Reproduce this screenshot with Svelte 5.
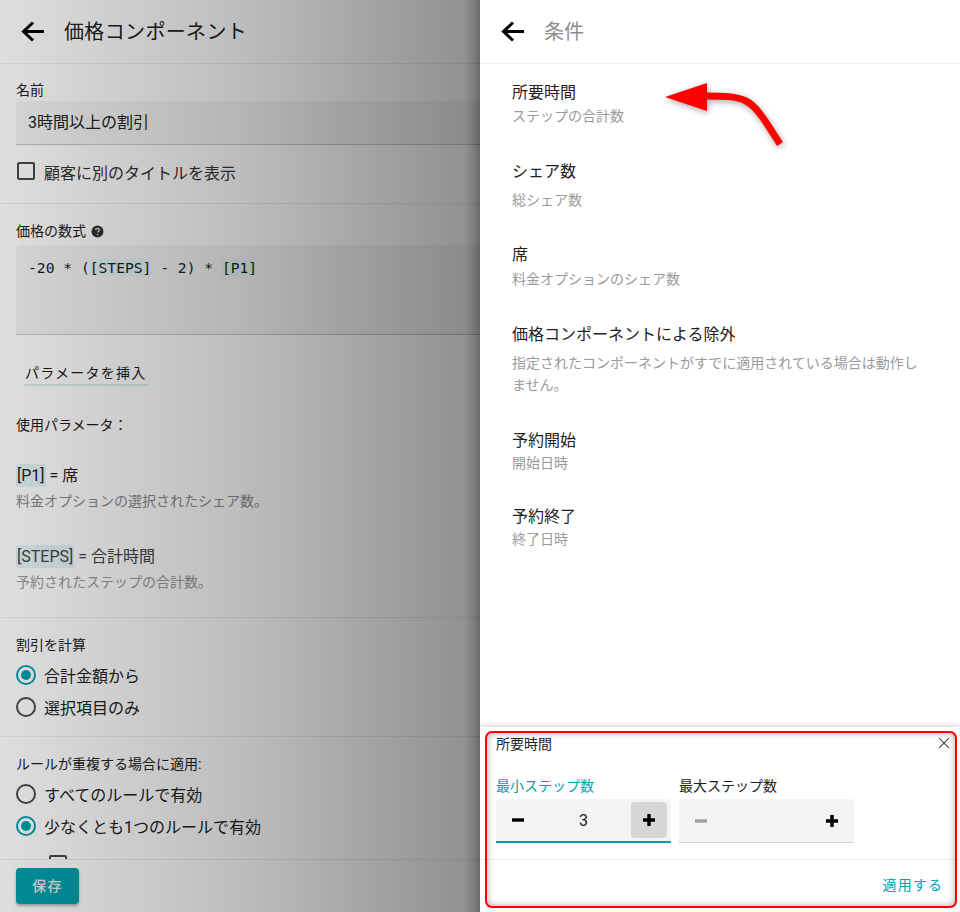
<script>
  const params = [
    { chip: '[P1]', name: '席', desc: '料金オプションの選択されたシェア数。', cls: '' },
    { chip: '[STEPS]', name: '合計時間', desc: '予約されたステップの合計数。', cls: 'dim' }
  ];
  const conditions = [
    { title: 'シェア数', desc: ['総シェア数'], cls: 'c2' },
    { title: '席', desc: ['料金オプションのシェア数'], cls: 'c3' },
    { title: '価格コンポーネントによる除外', desc: ['指定されたコンポーネントがすでに適用されている場合は動作し', 'ません。'], cls: 'c4' },
    { title: '予約開始', desc: ['開始日時'], cls: 'c5' },
    { title: '予約終了', desc: ['終了日時'], cls: 'c6' }
  ];
</script>

{#snippet back()}
  <svg class="back" width="24" height="22" viewBox="0 0 24 22" aria-hidden="true">
    <path d="M23 10.5H3M12 1.5L2.5 10.5L12 19.5" fill="none" stroke="#000" stroke-width="3"/>
  </svg>
{/snippet}

{#snippet minus(color)}
  <svg width="12" height="4" viewBox="0 0 12 4" aria-hidden="true"><rect width="12" height="3.4" y="0.3" fill={color}/></svg>
{/snippet}

{#snippet plus()}
  <svg width="12" height="12" viewBox="0 0 12 12" aria-hidden="true"><path d="M0 4.3h4.3V0h3.4v4.3H12v3.4H7.7V12H4.3V7.7H0z" fill="#000"/></svg>
{/snippet}

<div class="page">
  <section class="left">
    <header class="bar">
      {@render back()}
      <h1>価格コンポーネント</h1>
    </header>
    <div class="scroll">
      <div class="sec sec-name">
        <div class="label">名前</div>
        <div class="field">3時間以上の割引</div>
        <div class="check"><span class="box"></span><span>顧客に別のタイトルを表示</span></div>
      </div>
      <div class="sec sec-formula">
        <div class="label help">価格の数式
          <svg width="13" height="13" viewBox="0 0 13 13" aria-hidden="true">
            <circle cx="6.5" cy="6.5" r="6" fill="#333"/>
            <path d="M4.6 5.1c0-1 .8-1.7 1.9-1.7s1.9.7 1.9 1.6c0 1.3-1.8 1.3-1.8 2.6" fill="none" stroke="#ddd" stroke-width="1.3"/>
            <rect x="5.9" y="8.9" width="1.3" height="1.4" fill="#ddd"/>
          </svg>
        </div>
        <div class="area">-20 * (<span class="mchip">[STEPS]</span> - 2) * <span class="mchip">[P1]</span></div>
        <div class="insert"><span>パラメータを挿入</span></div>
        <div class="used">使用パラメータ：</div>
        {#each params as p}
          <div class="param {p.cls}"><span class="chip">{p.chip}</span> = {p.name}</div>
          <div class="pdesc {p.cls}">{p.desc}</div>
        {/each}
      </div>
      <div class="sec sec-calc">
        <div class="label">割引を計算</div>
        <div class="radio"><span class="dot on"></span>合計金額から</div>
        <div class="radio"><span class="dot"></span>選択項目のみ</div>
      </div>
      <div class="sec sec-rule">
        <div class="label">ルールが重複する場合に適用:</div>
        <div class="radio"><span class="dot"></span>すべてのルールで有効</div>
        <div class="radio"><span class="dot on"></span>少なくとも1つのルールで有効</div>
        <span class="box sub"></span>
      </div>
    </div>
    <footer class="foot"><button class="save">保存</button></footer>
    <div class="shade"></div>
  </section>

  <section class="right">
    <header class="bar">
      {@render back()}
      <h2>条件</h2>
    </header>
    <div class="list">
      <div class="cond c1"><div class="ct">所要時間</div><div class="cd">ステップの合計数</div></div>
      {#each conditions as c}
        <div class="cond {c.cls}">
          <div class="ct">{c.title}</div>
          <div class="cd">{#each c.desc as line}<div>{line}</div>{/each}</div>
        </div>
      {/each}
    </div>
    <div class="pop">
      <div class="pop-head">
        <span>所要時間</span>
        <svg width="12" height="12" viewBox="0 0 12 12" aria-hidden="true"><path d="M1.2 1.2l9.6 9.6M10.8 1.2l-9.6 9.6" stroke="#444" stroke-width="1.1" fill="none"/></svg>
      </div>
      <div class="steppers">
        <div class="stepper active">
          <div class="slabel">最小ステップ数</div>
          <div class="sbox">
            <span class="sbtn">{@render minus('#000')}</span>
            <span class="val">3</span>
            <span class="sbtn hov">{@render plus()}</span>
          </div>
        </div>
        <div class="stepper">
          <div class="slabel">最大ステップ数</div>
          <div class="sbox">
            <span class="sbtn">{@render minus('#9e9e9e')}</span>
            <span class="val"></span>
            <span class="sbtn">{@render plus()}</span>
          </div>
        </div>
      </div>
      <div class="pop-foot"><span>適用する</span></div>
    </div>
    <div class="redbox"></div>
    <svg class="redarrow" width="130" height="70" viewBox="0 0 130 70" aria-hidden="true">
      <g class="arrowg">
        <path d="M4 17L46 3V31z" fill="#f00"/>
        <path d="M45 16C62 16 75 16 85 21C97 27 107 46 119 64" fill="none" stroke="#f00" stroke-width="7"/>
      </g>
    </svg>
  </section>
</div>

<style>
  :global(body) { margin: 0; background: #fff; }
  .page {
    position: relative;
    display: flex;
    width: 960px;
    height: 912px;
    overflow: hidden;
    font-family: Roboto, "Noto Sans CJK JP", sans-serif;
    color: #212121;
    font-size: 16px;
  }
  .left, .right {
    position: relative;
    width: 480px;
    height: 912px;
    display: flex;
    flex-direction: column;
    background: #fff;
    overflow: hidden;
  }
  .bar {
    flex: none;
    height: 63px;
    border-bottom: 1px solid #eee;
    display: flex;
    align-items: center;
    padding-left: 21px;
    gap: 19px;
    box-sizing: content-box;
  }
  .back { flex: none; }
  h1, h2 { margin: 0; font-size: 20px; font-weight: 400; line-height: 28px; letter-spacing: 0.35px; }
  h1 { color: #212121; }
  h2 { color: #8e8e8e; letter-spacing: 0; }
  .scroll { flex: 1; overflow: hidden; }
  .sec { padding: 0 0 0 16px; border-bottom: 1px solid #eee; box-sizing: border-box; }
  .sec-name { height: 140px; padding-top: 16px; }
  .sec-formula { height: 414px; padding-top: 17px; }
  .sec-calc { height: 119px; padding-top: 17px; }
  .sec-rule { position: relative; height: 140px; padding-top: 17px; border-bottom: 0; }
  .label { font-size: 14px; line-height: 20px; color: #212121; }
  .help { display: flex; align-items: center; gap: 5px; }
  .field {
    margin-top: 1px;
    height: 43px;
    line-height: 43px;
    padding-left: 12px;
    background: #f4f4f4;
    border-bottom: 1px solid #c8c8c8;
    border-radius: 4px 4px 0 0;
  }
  .check { display: flex; align-items: center; gap: 9px; margin-top: 16px; height: 22px; color: #333; padding-left: 1px; }
  .box { display: inline-block; flex: none; width: 14px; height: 14px; border: 2px solid #4a4a4a; border-radius: 2px; }
  .check .box { margin-bottom: 2px; }
  .area {
    margin-top: 4px;
    padding: 12px 12px 0;
    box-sizing: content-box;
    height: 77px;
    background: #f4f4f4;
    border-bottom: 1px solid #c8c8c8;
    border-radius: 4px 4px 0 0;
    font-family: "DejaVu Sans Mono", monospace;
    font-size: 14.65px;
    line-height: 22px;
  }
  .mchip { background: #e4f4f5; border-radius: 2px; }
  .insert { margin-top: 27px; padding-left: 8px; font-size: 14px; line-height: 22px; letter-spacing: 1.25px; color: #1a1a1a; }
  .insert span { display: inline-block; padding: 0 1px; border-bottom: 2px solid #d6eef0; }
  .used { margin-top: 29px; font-size: 14px; line-height: 20px; color: #1a1a1a; }
  .param { margin-top: 29px; height: 24px; font-size: 16px; line-height: 24px; color: #212121; }
  .chip { background: #e4f4f5; border-radius: 3px; padding: 2px 1px; }
  .pdesc { margin-top: 3px; font-size: 14px; line-height: 20px; color: #8a8a8a; }
  .pdesc + .param { margin-top: 34px; }
  .param.dim { color: #444; }
  .pdesc.dim { color: #9a9a9a; }
  .radio { display: flex; align-items: center; gap: 8px; height: 32px; font-size: 16px; color: #212121; }
  .label + .radio { margin-top: 4px; }
  .dot {
    position: relative;
    flex: none;
    width: 16px;
    height: 16px;
    border: 2px solid #4a4a4a;
    border-radius: 50%;
  }
  .dot.on { border-color: #00a0ac; }
  .dot.on::after {
    content: "";
    position: absolute;
    inset: 3px;
    border-radius: 50%;
    background: #00a0ac;
  }
  .sub { position: absolute; left: 49px; top: 118px; }
  .foot {
    flex: none;
    height: 53px;
    border-top: 1px solid #eee;
    background: #fff;
    padding: 8px 16px;
    box-sizing: border-box;
    position: absolute;
    left: 0; right: 0; bottom: 0;
  }
  .save {
    display: block;
    width: 63px;
    height: 36px;
    border: 0;
    border-radius: 4px;
    padding: 0 0 3px;
    background: #00a0ac;
    color: #ececec;
    font: 500 14px Roboto, "Noto Sans CJK JP", sans-serif;
    letter-spacing: 1.25px;
    box-shadow: 0 2px 3px rgba(0,0,0,.3);
  }
  .shade {
    position: absolute;
    inset: 0;
    pointer-events: none;
    background: linear-gradient(90deg, rgba(0,0,0,.13) 0, rgba(0,0,0,.26) 50%, rgba(0,0,0,.43) 97%, rgba(0,0,0,.58) 100%);
  }
  .list { flex: 1; padding: 0 32px; }
  .ct { font-size: 16px; line-height: 24px; color: #212121; }
  .cd { font-size: 14px; line-height: 22px; color: #9a9a9a; }
  .c1 { padding-top: 17px; }
  .c2 { padding-top: 33px; }
  .c2 .cd { margin-top: 5px; }
  .c3 { padding-top: 32px; }
  .c3 .cd { margin-top: 1px; }
  .c4 { padding-top: 33px; }
  .c4 .cd { margin-top: 5px; }
  .c5 { padding-top: 33px; }
  .c5 .cd { margin-top: -1px; }
  .c6 { padding-top: 31px; }
  .c6 .cd { margin-top: -1px; }
  .pop {
    flex: none;
    height: 185px;
    background: #fff;
    box-shadow: 0 -1px 6px rgba(0,0,0,.2);
    box-sizing: border-box;
    padding-top: 5px;
  }
  .pop-head { display: flex; justify-content: space-between; align-items: center; padding: 0 10px 0 16px; height: 22px; font-size: 14px; color: #212121; }
  .steppers { display: flex; gap: 8px; padding: 0 16px; margin-top: 22px; }
  .stepper { width: 175px; }
  .slabel { font-size: 14px; line-height: 20px; color: #212121; }
  .stepper.active .slabel { color: #00a0ac; }
  .sbox {
    margin-top: 3px;
    height: 44px;
    box-sizing: border-box;
    background: #f4f4f4;
    border-radius: 4px 4px 0 0;
    border-bottom: 1px solid #d5d5d5;
    display: flex;
    align-items: center;
    padding: 0 4px;
  }
  .stepper.active .sbox { border-bottom: 2px solid #00a0ac; }
  .sbtn { flex: none; width: 36px; height: 36px; display: flex; align-items: center; justify-content: center; border-radius: 4px; }
  .sbtn.hov { background: #d6d6d6; }
  .val { flex: 1; text-align: center; font-size: 16px; color: #212121; }
  .pop-foot {
    margin-top: 16px;
    border-top: 1px solid #eee;
    height: 48px;
    display: flex;
    align-items: center;
    justify-content: flex-end;
    padding: 0 17px;
    font-size: 14px;
    letter-spacing: 1.1px;
    color: #00a0ac;
  }
  .redbox {
    position: absolute;
    left: 5px;
    top: 731px;
    width: 468px;
    height: 173px;
    border: 2px solid #f00;
    border-radius: 7px;
    box-shadow: inset 0 0 7px rgba(0,0,0,.35);
    pointer-events: none;
  }
  .redarrow { position: absolute; left: 181px; top: 80px; pointer-events: none; overflow: visible; }
  .arrowg { filter: drop-shadow(1px 2px 3px rgba(0,0,0,.35)); }
</style>
